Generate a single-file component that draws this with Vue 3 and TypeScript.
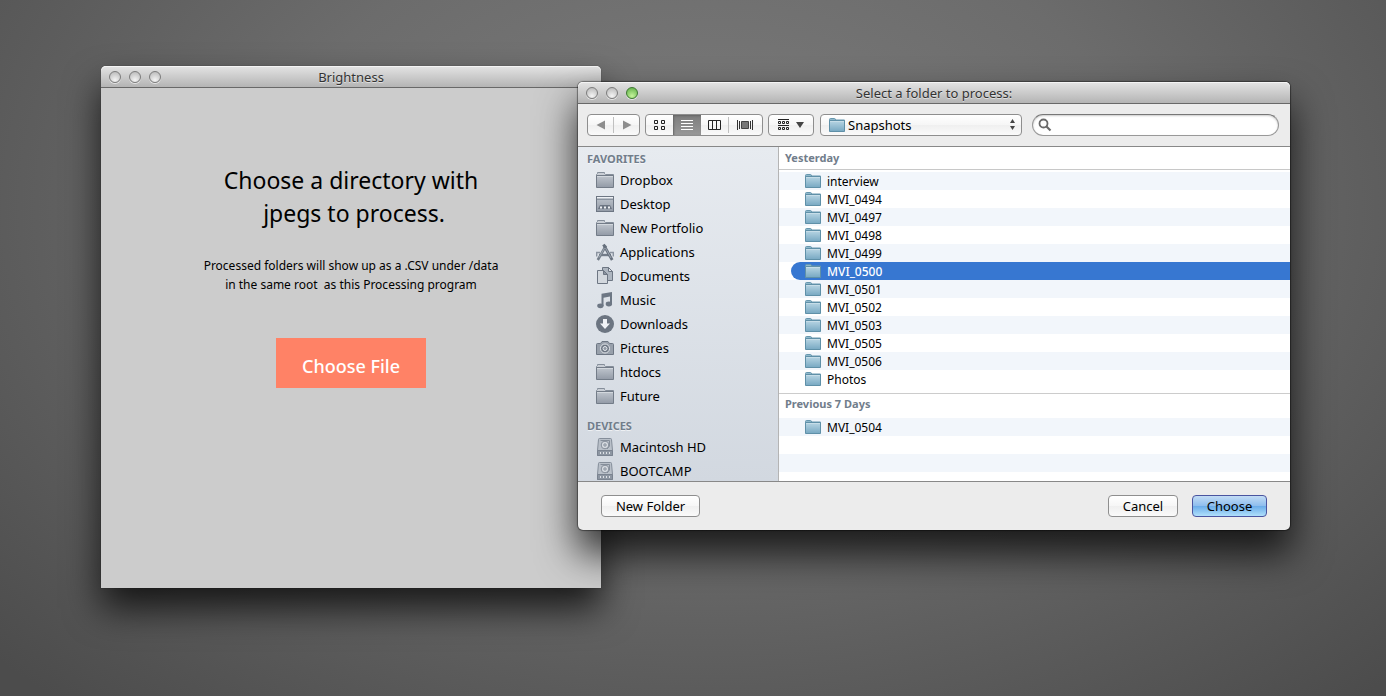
<script setup lang="ts">
import { ref } from 'vue'

interface Place { name: string; icon: string }
interface Group { title: string; files: string[] }

const favorites: Place[] = [
  { name: 'Dropbox', icon: 'folder' },
  { name: 'Desktop', icon: 'desktop' },
  { name: 'New Portfolio', icon: 'folder' },
  { name: 'Applications', icon: 'apps' },
  { name: 'Documents', icon: 'docs' },
  { name: 'Music', icon: 'music' },
  { name: 'Downloads', icon: 'download' },
  { name: 'Pictures', icon: 'camera' },
  { name: 'htdocs', icon: 'folder' },
  { name: 'Future', icon: 'folder' },
]
const devices: Place[] = [
  { name: 'Macintosh HD', icon: 'disk' },
  { name: 'BOOTCAMP', icon: 'disk' },
]
const sections = [
  { title: 'FAVORITES', places: favorites },
  { title: 'DEVICES', places: devices },
]
const groups: Group[] = [
  {
    title: 'Yesterday',
    files: ['interview', 'MVI_0494', 'MVI_0497', 'MVI_0498', 'MVI_0499', 'MVI_0500',
      'MVI_0501', 'MVI_0502', 'MVI_0503', 'MVI_0505', 'MVI_0506', 'Photos'],
  },
  { title: 'Previous 7 Days', files: ['MVI_0504'] },
]
const selected = ref('MVI_0500')
const folder = ref('Snapshots')
const query = ref('')
const view = ref('list')
</script>

<template>
  <main class="desktop">
    <svg class="defs" width="0" height="0" aria-hidden="true">
      <defs>
        <linearGradient id="blueFolder" x1="0" y1="0" x2="0" y2="1">
          <stop offset="0" stop-color="#b9d6e4" /><stop offset="1" stop-color="#77a8c2" />
        </linearGradient>
        <linearGradient id="greyFolder" x1="0" y1="0" x2="0" y2="1">
          <stop offset="0" stop-color="#c0c6ce" /><stop offset="1" stop-color="#929aa6" />
        </linearGradient>
      </defs>
      <symbol id="blue-folder" viewBox="0 0 16 14">
        <path d="M.5 3V1.500Q.5 .5 1.500 .5H5.500Q6.500 .5 6.500 2H15.500V4H.5Z" fill="#8fb8cb" stroke="#6797ae" />
        <path d="M.5 2.500H15.500V13.500H.5Z" fill="url(#blueFolder)" stroke="#5f90a8" />
        <path d="M1 3.500H15" stroke="#c6dde8" />
      </symbol>
    </svg>

    <section class="window sketch" aria-labelledby="sketch-title">
      <header class="titlebar">
        <span class="lights"><button aria-label="Close"></button><button aria-label="Minimize"></button><button aria-label="Zoom"></button></span>
        <h1 id="sketch-title">Brightness</h1>
      </header>
      <div class="canvas">
        <h2>Choose a directory with<br>&nbsp;jpegs to process.</h2>
        <p>Processed folders will show up as a .CSV under /data<br>in the same root&nbsp; as this Processing program</p>
        <button class="pick">Choose File</button>
      </div>
    </section>

    <section class="window dialog" role="dialog" aria-labelledby="dialog-title">
      <header class="titlebar">
        <span class="lights"><button aria-label="Close"></button><button aria-label="Minimize"></button><button class="green" aria-label="Zoom"></button></span>
        <h1 id="dialog-title">Select a folder to process:</h1>
      </header>

      <div class="toolbar">
        <div class="segments nav">
          <button aria-label="Back"><svg width="10" height="10" viewBox="0 0 10 10"><path d="M9 .5V9.500L.5 5Z" fill="#8d8d8d" /></svg></button>
          <i class="divider"></i>
          <button aria-label="Forward"><svg width="10" height="10" viewBox="0 0 10 10"><path d="M1 .5V9.500L9.500 5Z" fill="#8d8d8d" /></svg></button>
        </div>
        <div class="segments views">
          <button aria-label="Icons" :class="{ on: view === 'icons' }" @click="view = 'icons'">
            <svg width="12" height="12" viewBox="0 0 12 12"><path d="M.5 1.500H3.500V4.500H.5ZM7.500 1.500H10.500V4.500H7.500ZM.5 7.500H3.500V10.500H.5ZM7.500 7.500H10.500V10.500H7.500Z" fill="none" stroke="#222" /></svg>
          </button>
          <button aria-label="List" :class="{ on: view === 'list' }" @click="view = 'list'">
            <svg width="12" height="12" viewBox="0 0 12 12"><path d="M0 1.500H12M0 4.500H12M0 7.500H12M0 10.500H12" stroke="#fff" /></svg>
          </button>
          <button aria-label="Columns" :class="{ on: view === 'columns' }" @click="view = 'columns'">
            <svg width="13" height="12" viewBox="0 0 13 12"><path d="M.5 1.500H12.500V10.500H.5ZM4.500 1V11M8.500 1V11" fill="none" stroke="#222" /></svg>
          </button>
          <i class="divider"></i>
          <button class="flow" aria-label="Cover Flow" :class="{ on: view === 'flow' }" @click="view = 'flow'">
            <svg width="16" height="12" viewBox="0 0 16 12"><path d="M.5 1V11M2.500 2V10M13.500 2V10M15.500 1V11" stroke="#333" /><path d="M4.500 2.500H11.500V9.500H4.500Z" fill="#777" stroke="#444" /></svg>
          </button>
        </div>
        <button class="box arrange" aria-label="Arrange">
          <svg width="12" height="12" viewBox="0 0 12 12"><path d="M0 .5H11M0 6.500H11" stroke="#222" /><path d="M.5 2.500H2.500V4.500H.5ZM4.500 2.500H6.500V4.500H4.500ZM8.500 2.500H10.500V4.500H8.500ZM.5 8.500H2.500V10.500H.5ZM4.500 8.500H6.500V10.500H4.500ZM8.500 8.500H10.500V10.500H8.500Z" fill="none" stroke="#222" /></svg>
          <svg width="8" height="6" viewBox="0 0 8 6"><path d="M0 0H8L4 6Z" fill="#444" /></svg>
        </button>
        <div class="popup">
          <svg class="popup-folder" width="16" height="14"><use href="#blue-folder" /></svg>
          <select v-model="folder" class="box" aria-label="Folder"><option>Snapshots</option></select>
          <svg class="popup-arrows" width="5" height="11" viewBox="0 0 5 11"><path d="M0 4L2.500 0L5 4ZM0 7L2.500 11L5 7Z" fill="#444" /></svg>
        </div>
        <div class="search">
          <svg width="14" height="14" viewBox="0 0 14 14"><circle cx="5.500" cy="5.500" r="4" fill="none" stroke="#6a6a6a" stroke-width="1.800" /><path d="M8.500 8.500L12.500 12.500" stroke="#6a6a6a" stroke-width="2.200" /></svg>
          <input v-model="query" type="search" aria-label="Search">
        </div>
      </div>

      <div class="browser">
        <nav class="sidebar" aria-label="Places">
          <section v-for="s in sections" :key="s.title">
            <h2>{{ s.title }}</h2>
            <ul>
              <li v-for="p in s.places" :key="p.name">
                <button>
                  <svg width="18" height="18" viewBox="0 0 18 18" aria-hidden="true">
                    <template v-if="p.icon === 'folder'">
                      <path d="M.5 5V3.500L1.500 2.500V1.500H8.500V2.500L9.500 3.500H17.500V5Z" fill="#c9ced5" stroke="#858e9a" />
                      <path d="M.5 4.500H17.500V16.500H.5Z" fill="url(#greyFolder)" stroke="#737c88" />
                      <path d="M1 5.500H17" stroke="#d3d8de" />
                    </template>
                    <template v-else-if="p.icon === 'desktop'">
                      <rect x=".5" y="1.500" width="17" height="15" fill="url(#greyFolder)" stroke="#6d7683" />
                      <path d="M1 2.500H17" stroke="#eef1f5" /><path d="M1 4.500H17" stroke="#8a939f" />
                      <path d="M4 10H14L16 14H2Z" fill="#6d7683" />
                      <path d="M4 11.500H6V13.500H4ZM8 11.500H10V13.500H8ZM12 11.500H14V13.500H12Z" fill="#edf0f3" />
                    </template>
                    <template v-else-if="p.icon === 'apps'">
                      <path d="M.7 13.500V9.500H4M14 9.500H17.300V13.500" fill="none" stroke="#8b94a0" stroke-width="1.400" />
                      <path d="M3 12H15" stroke="#737c89" stroke-width="2.400" />
                      <path d="M1.800 17L10 2.500" fill="none" stroke="#737d89" stroke-width="2.600" />
                      <path d="M7.500 1.500L16.200 17" fill="none" stroke="#66707d" stroke-width="2.800" />
                      <path d="M3 14.500L8.500 5M9.500 5L15 15" stroke="#a9b1bb" stroke-width=".8" />
                    </template>
                    <template v-else-if="p.icon === 'docs'">
                      <path d="M6.500 .5H12.500L16.500 4.500V13.500H6.500Z" fill="#aeb6c0" stroke="#6d7683" />
                      <path d="M12.500 .5V4.500H16.500Z" fill="#dfe3e8" stroke="#6d7683" />
                      <path d="M1.500 3.500H7.500L11.500 7.500V16.500H1.500Z" fill="#d3d8de" stroke="#6d7683" />
                      <path d="M7.500 3.500V7.500H11.500Z" fill="#8a939f" stroke="#6d7683" />
                    </template>
                    <template v-else-if="p.icon === 'music'">
                      <path d="M5.500 2.800L16 1V13H14V5.500L7.500 6.800V15H5.500Z" fill="#6d7784" />
                      <ellipse cx="4.400" cy="14.800" rx="3.200" ry="2.400" fill="#6d7784" /><ellipse cx="12.900" cy="13" rx="3.200" ry="2.400" fill="#6d7784" />
                    </template>
                    <template v-else-if="p.icon === 'download'">
                      <circle cx="9" cy="9" r="9" fill="#6c7581" />
                      <path d="M7 4H11V8.500H14L9 14L4 8.500H7Z" fill="#f1f3f6" />
                    </template>
                    <template v-else-if="p.icon === 'camera'">
                      <path d="M.5 5.500Q.5 4.500 1.500 4.500H4.500L6 2.500H12L13.500 4.500H16.500Q17.500 4.500 17.500 5.500V15.500H.5Z" fill="#98a0ab" stroke="#6d7683" />
                      <circle cx="9" cy="9.500" r="4.500" fill="#6d7683" stroke="#e3e7eb" />
                      <circle cx="9" cy="9.500" r="2" fill="#8f98a4" stroke="#e3e7eb" />
                    </template>
                    <template v-else>
                      <path d="M2.500 1.500Q2.500 .5 3.500 .5H14.500Q15.500 .5 15.500 1.500L16.500 12.500V17.500H1.500V12.500Z" fill="#b9c0c9" stroke="#858e9a" />
                      <path d="M1.500 12.500H16.500V17.500H1.500Z" fill="#8d96a2" stroke="#7a8390" />
                      <circle cx="9" cy="7" r="3.800" fill="#d5dae0" stroke="#858e9a" /><circle cx="9" cy="7" r="1.200" fill="none" stroke="#858e9a" />
                      <path d="M4.500 2.500H13.500V8L11 11" fill="none" stroke="#858e9a" />
                      <path d="M4.500 14V16M7.500 14V16M10.500 14V16M13.500 14V16" stroke="#dce0e5" />
                    </template>
                  </svg>
                  {{ p.name }}
                </button>
              </li>
            </ul>
          </section>
        </nav>

        <div class="files">
          <section v-for="g in groups" :key="g.title">
            <h2>{{ g.title }}</h2>
            <ul>
              <li v-for="f in g.files" :key="f">
                <button :class="{ selected: f === selected }" @click="selected = f">
                  <svg width="16" height="14" aria-hidden="true"><use href="#blue-folder" /></svg><span>{{ f }}</span>
                </button>
              </li>
            </ul>
          </section>
        </div>
      </div>

      <footer>
        <button class="box new">New Folder</button>
        <button class="box cancel">Cancel</button>
        <button class="box default">Choose</button>
      </footer>
    </section>
  </main>
</template>

<style>
body { margin: 0; }
</style>

<style scoped>
* { box-sizing: border-box; }
.desktop {
  position: relative;
  min-height: 100vh;
  overflow: hidden;
  background: radial-gradient(ellipse 70% 95% at 51% 30%, #7c7c7c 0%, #6c6c6c 45%, #4c4c4c 100%);
  font: 13px/18px "Noto Sans", "Open Sans", sans-serif;
  color: #000;
}
.defs { position: absolute; }
h1, h2, p, ul { margin: 0; padding: 0; font: inherit; }
ul { list-style: none; }
button, input, select { margin: 0; padding: 0; border: 0; background: none; font: inherit; color: inherit; }
svg { display: block; flex: none; }

.window { position: absolute; border-radius: 5px 5px 0 0; }
.sketch {
  left: 101px;
  top: 66px;
  width: 500px;
  background: #ccc;
  box-shadow: 0 0 1px rgba(0, 0, 0, .6), 0 20px 36px rgba(0, 0, 0, .75);
}
.dialog {
  left: 578px;
  right: 96px;
  top: 82px;
  border-radius: 5px;
  background: #ececec;
  box-shadow: 0 0 1px 1px rgba(0, 0, 0, .4), 0 22px 38px 2px rgba(0, 0, 0, .75);
}
.titlebar {
  display: grid;
  grid-template-columns: 1fr auto 1fr;
  align-items: center;
  height: 22px;
  padding: 0 8px;
  border-bottom: 1px solid #686868;
  border-radius: 5px 5px 0 0;
  background: linear-gradient(#e4e4e4, #b4b4b4);
  box-shadow: inset 0 1px #f4f4f4;
}
.titlebar h1 { color: #333; text-shadow: 0 1px rgba(255, 255, 255, .5); }
.lights { display: flex; gap: 8px; }
.lights button {
  width: 12px;
  height: 12px;
  border: 1px solid #7c7c7c;
  border-radius: 50%;
  background: radial-gradient(circle at 50% 80%, #f4f4f4, #b4b4b4);
  box-shadow: 0 1px rgba(255, 255, 255, .6);
}
.lights .green { border-color: #3d7831; background: radial-gradient(circle at 50% 80%, #c5f49b, #5bac43); }

.canvas {
  display: flex;
  flex-direction: column;
  align-items: center;
  padding: 76px 24px 200px;
  text-align: center;
}
.canvas h2 { font-size: 23px; line-height: 33px; }
.canvas p { margin-top: 26px; font-size: 12px; line-height: 19px; }
.pick {
  width: 150px;
  height: 50px;
  margin-top: 44px;
  padding-top: 6px;
  background: #ff8266;
  color: #fff;
  font-size: 18px;
  font-weight: 500;
}

.toolbar {
  display: flex;
  align-items: center;
  gap: 6px;
  height: 43px;
  padding: 0 11px 0 9px;
  border-bottom: 1px solid #888;
}
.segments, .box {
  display: flex;
  align-items: center;
  height: 22px;
  border: 1px solid #8e8e8e;
  border-radius: 4px;
  background: linear-gradient(#fff, #f6f6f6 50%, #efefef 50%, #fafafa);
}
.segments button { display: flex; flex: 1; align-items: center; justify-content: center; align-self: stretch; }
.segments .flow { flex: 0 0 33px; }
.nav { width: 53px; margin-right: -1px; }
.views { width: 118px; margin-right: -1px; }
.views .on { background: linear-gradient(#7d7d7d, #989898); box-shadow: inset 1px 1px 2px #666; }
.divider { width: 1px; height: 16px; background: #c0c0c0; }
.arrange { justify-content: center; gap: 6px; width: 46px; }
.popup { position: relative; width: 202px; }
.popup select { width: 100%; padding: 0 24px 0 27px; appearance: none; }
.popup-folder { position: absolute; left: 9px; top: 4px; }
.popup-arrows { position: absolute; right: 7px; top: 5px; }
.search {
  display: flex;
  flex: 1;
  align-items: center;
  gap: 6px;
  height: 22px;
  margin-left: 4px;
  padding: 0 5px;
  border: 1px solid #999;
  border-top-color: #777;
  border-radius: 11px;
  background: #fff;
  box-shadow: inset 0 1px 2px #ccc;
}
.search input { flex: 1; min-width: 0; outline: none; appearance: none; }

.browser { display: flex; height: 334px; overflow: hidden; background: #fff; }
.sidebar {
  flex: none;
  width: 201px;
  overflow: hidden;
  border-right: 1px solid #b4b4b4;
  background: linear-gradient(#e7ebf0, #d2d8e0);
}
.sidebar h2 {
  padding: 3px 9px 0;
  color: #717d8b;
  font-size: 11px;
  font-weight: 700;
  text-shadow: 0 1px rgba(255, 255, 255, .6);
}
.sidebar section + section h2 { padding-top: 9px; }
.sidebar button { display: flex; align-items: center; gap: 6px; width: 100%; height: 24px; padding-left: 18px; }

.files { flex: 1; }
.files h2 {
  height: 23px;
  padding: 2px 6px;
  border-bottom: 1px solid #c8c8c8;
  color: #717d8b;
  font-size: 11px;
  font-weight: 700;
}
.files ul { padding: 2px 0 5px; }
.files section + section h2 { height: 25px; padding-top: 1px; border-bottom: 0; border-top: 1px solid #ccc; }
.files section + section ul { padding-top: 0; }
.files section:last-child ul {
  height: 63px;
  background: repeating-linear-gradient(#f2f6fb 0 18px, #fff 18px 36px);
}
.files li { height: 18px; padding-left: 12px; font-size: 12px; }
.files li:nth-child(odd) { background: #f2f6fb; }
.files li button { display: flex; align-items: center; gap: 6px; width: 100%; height: 18px; padding-left: 14px; }
.files li span { padding-top: 2px; }
.files .selected { border-radius: 9px 0 0 9px; background: #3777d1; color: #fff; font-weight: 500; }

footer {
  display: flex;
  align-items: center;
  gap: 14px;
  height: 49px;
  padding: 0 23px;
  border-top: 1px solid #888;
}
footer .box { justify-content: center; }
.new { width: 99px; margin-right: auto; }
.cancel { width: 70px; }
.default {
  width: 75px;
  border-color: #4a55a0;
  background: linear-gradient(#c2dcf5, #8dbdee 50%, #69abe9 50%, #b0e0fb);
}
</style>
